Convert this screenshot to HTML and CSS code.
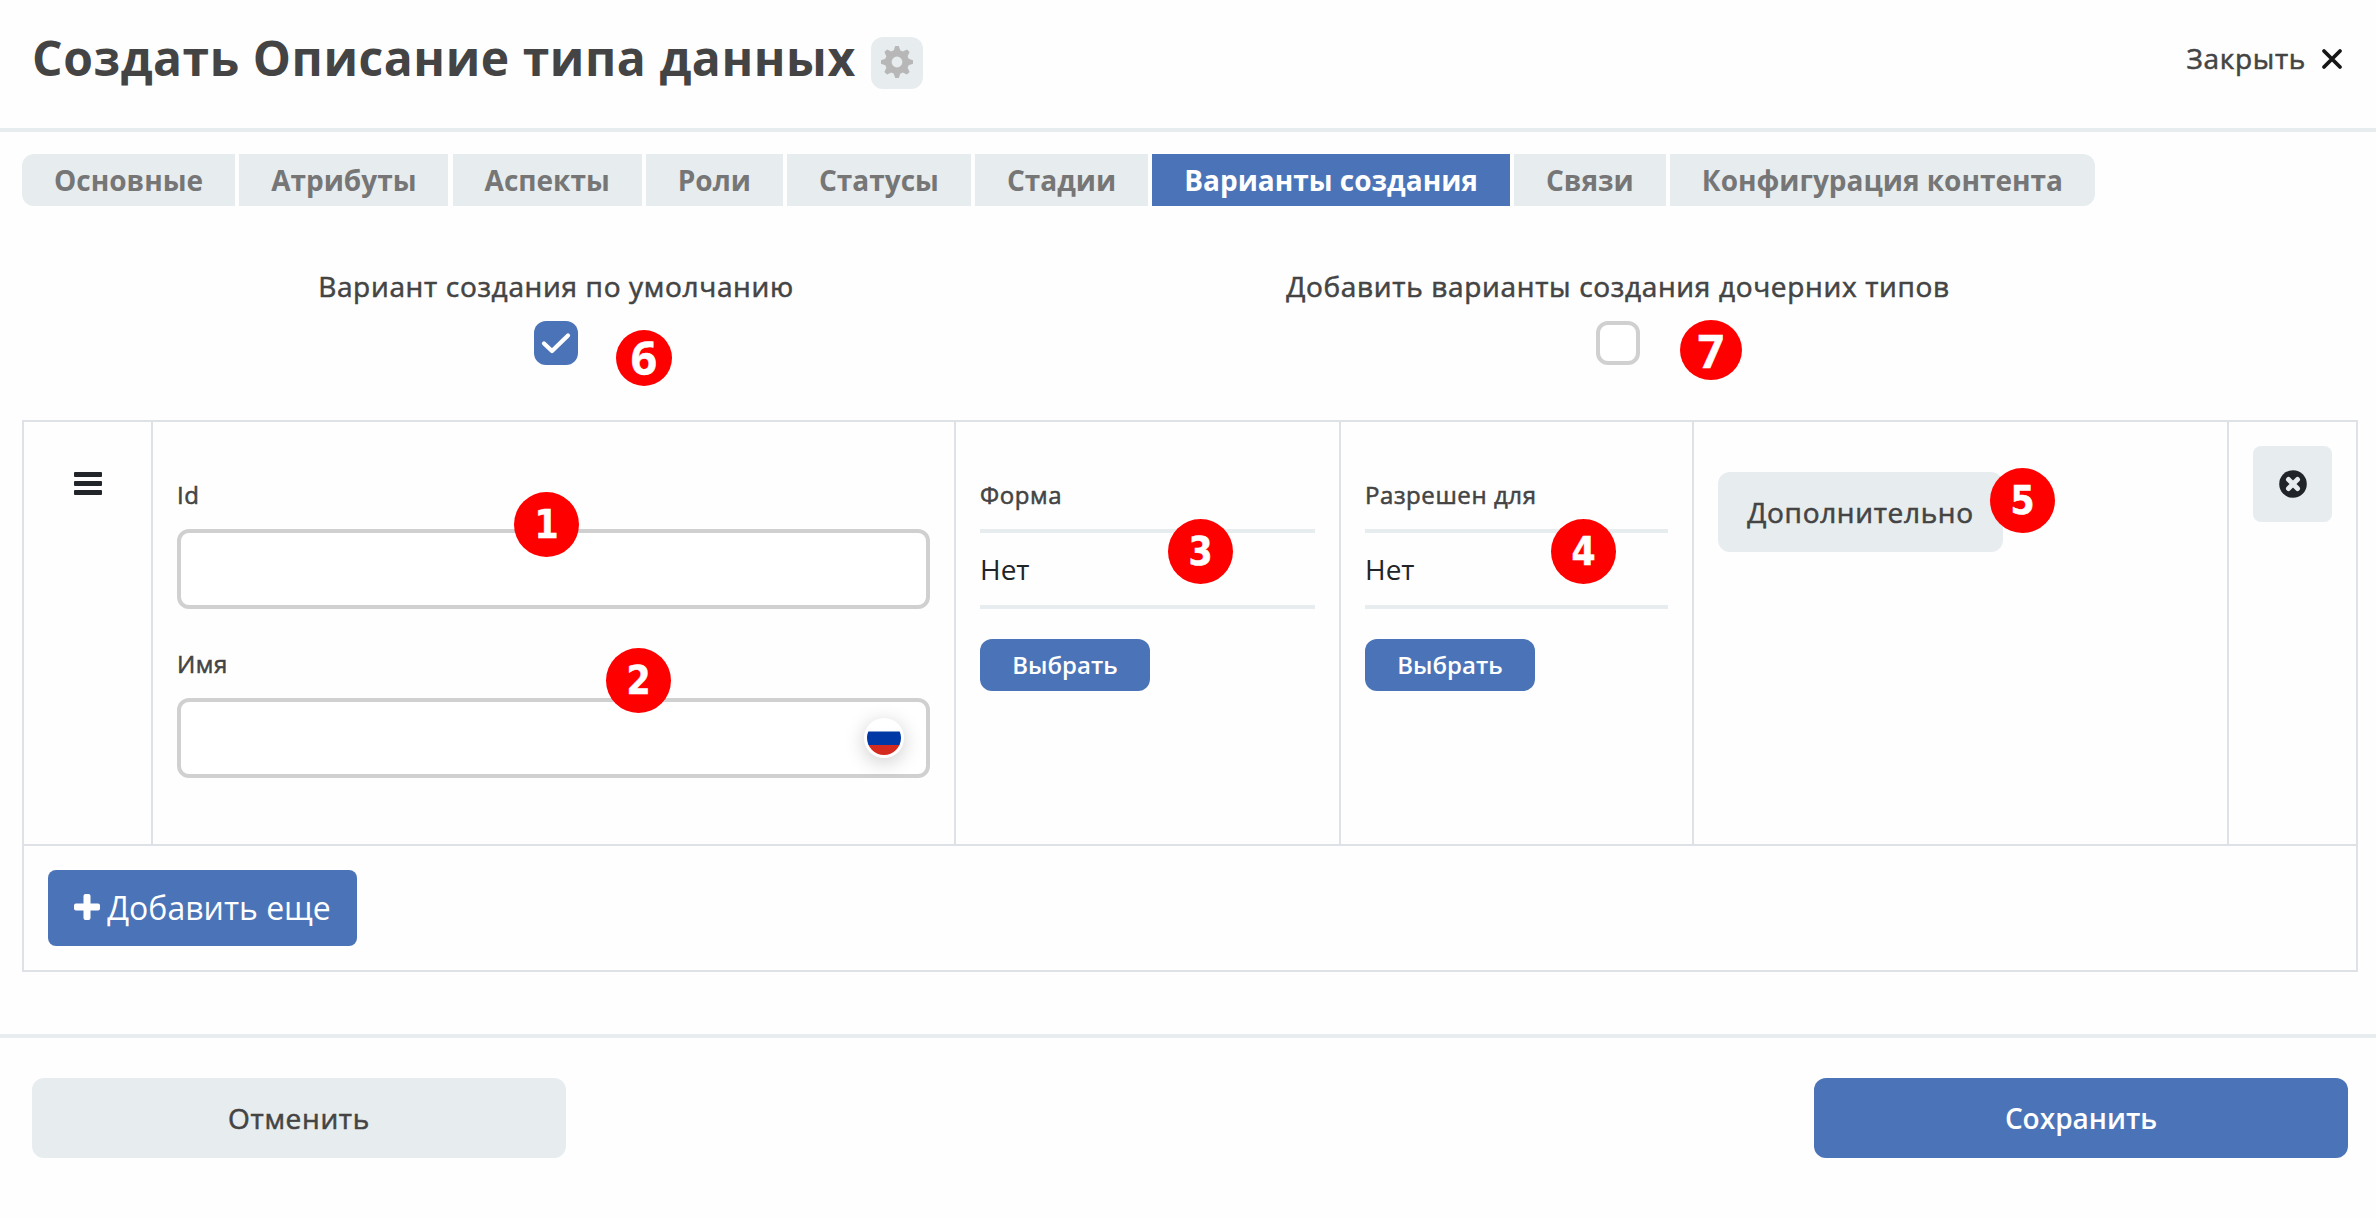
FILE: index.html
```html
<!DOCTYPE html>
<html lang="ru">
<head>
<meta charset="utf-8">
<title>Создать Описание типа данных</title>
<link rel="stylesheet" href="styles.css">
</head>
<body>
<div class="modal">
  <header class="header">
    <h1 class="title">Создать Описание типа данных</h1>
    <button class="gear" aria-label="Настройки">
      <svg width="32" height="32" viewBox="0 0 32 32"><path fill="#b7b7b7" fill-rule="evenodd" d="M14.200 0h3.600l1.400 4.300 2.600 1.100 4.100-2 2.700 2.700-2 4.100 1.100 2.600 4.300 1.400v3.600l-4.300 1.400-1.100 2.600 2 4.100-2.700 2.700-4.100-2-2.600 1.100-1.400 4.300h-3.600l-1.400-4.300-2.600-1.100-4.100 2-2.700-2.700 2-4.100-1.100-2.600L0 17.800v-3.600l4.300-1.400 1.100-2.600-2-4.100 2.700-2.700 4.100 2 2.600-1.100zM16 10.600a5.400 5.400 0 1 0 0 10.800a5.400 5.400 0 0 0 0-10.800z"/></svg>
    </button>
    <button class="close medium">Закрыть
      <svg width="22" height="22" viewBox="0 0 22 22"><path d="M3 3l16 16M19 3L3 19" stroke="#161616" stroke-width="3.800" stroke-linecap="round"/></svg>
    </button>
  </header>
  <nav class="tabs">
    <a class="tab">Основные</a>
    <a class="tab">Атрибуты</a>
    <a class="tab">Аспекты</a>
    <a class="tab">Роли</a>
    <a class="tab">Статусы</a>
    <a class="tab">Стадии</a>
    <a class="tab active">Варианты создания</a>
    <a class="tab">Связи</a>
    <a class="tab">Конфигурация контента</a>
  </nav>
  <section class="options">
    <div class="option">
      <span class="medium">Вариант создания по умолчанию</span>
      <span class="check checked"><svg width="44" height="44" viewBox="0 0 44 44"><path d="M10 22.500l8 7.500L34 14.500" fill="none" stroke="#fff" stroke-width="4.200" stroke-linecap="round" stroke-linejoin="round"/></svg></span>
      <b class="badge sans b6">6</b>
    </div>
    <div class="option">
      <span class="medium">Добавить варианты создания дочерних типов</span>
      <span class="check"></span>
      <b class="badge sans b7">7</b>
    </div>
  </section>
  <section class="grid">
    <div class="row">
      <div class="cell drag">
        <svg width="28" height="23" viewBox="0 0 28 23" fill="#212529"><rect width="28" height="5" rx="1"/><rect y="9" width="28" height="5" rx="1"/><rect y="18" width="28" height="5" rx="1"/></svg>
      </div>
      <div class="cell form">
        <label class="label medium">Id</label>
        <div class="input"></div>
        <label class="label medium">Имя</label>
        <div class="input">
          <span class="flag"><svg width="34" height="34" viewBox="0 0 34 34"><path fill="#0039a6" d="M0 10.500h34V24H0z"/><path fill="#d52b1e" d="M0 24h34v10H0z"/></svg></span>
        </div>
        <b class="badge b1">1</b>
        <b class="badge b2">2</b>
      </div>
      <div class="cell form">
        <label class="label medium">Форма</label>
        <div class="value">Нет</div>
        <button class="select">Выбрать</button>
        <b class="badge b3">3</b>
      </div>
      <div class="cell form">
        <label class="label medium">Разрешен для</label>
        <div class="value">Нет</div>
        <button class="select">Выбрать</button>
        <b class="badge b4">4</b>
      </div>
      <div class="cell extra">
        <button class="more medium">Дополнительно</button>
        <b class="badge b5">5</b>
      </div>
      <div class="cell remove-cell">
        <button class="remove" aria-label="Удалить">
          <svg width="28" height="28" viewBox="0 0 28 28"><circle cx="14" cy="14" r="13.800" fill="#212529"/><path d="M9.500 9.500l9 9M18.500 9.500l-9 9" stroke="#e7ecee" stroke-width="5" stroke-linecap="round"/></svg>
        </button>
      </div>
    </div>
    <div class="add-row">
      <button class="add"><svg width="26" height="26" viewBox="0 0 26 26"><path d="M11.500 0h3a2 2 0 0 1 2 2v7.500H24a2 2 0 0 1 2 2v3a2 2 0 0 1-2 2h-7.500V24a2 2 0 0 1-2 2h-3a2 2 0 0 1-2-2v-7.500H2a2 2 0 0 1-2-2v-3a2 2 0 0 1 2-2h7.500V2a2 2 0 0 1 2-2z" fill="#fff"/></svg>Добавить еще</button>
    </div>
  </section>
  <footer class="footer">
    <button class="action cancel medium">Отменить</button>
    <button class="action save">Сохранить</button>
  </footer>
</div>
</body>
</html>
```
FILE: styles.css
```css
* { box-sizing: border-box; }
body { margin: 0; background: #fefefe; color: #444; font-family: "Open Sans", sans-serif; font-size: 28px; font-weight: 400; }
button { border: 0; padding: 0; background: none; font: inherit; color: inherit; display: flex; align-items: center; justify-content: center; }
svg { display: block; flex: none; }
.medium { letter-spacing: .024em; -webkit-text-stroke: .55px currentColor; }
.modal { display: flex; flex-direction: column; width: 2376px; height: 1218px; overflow: hidden; }
.header { display: flex; align-items: flex-start; height: 132px; padding: 0 33px 0 32px; border-bottom: 4px solid #e7ecee; }
.title { margin: 25px 15px 0 0; font-size: 48px; line-height: 66px; font-weight: 700; letter-spacing: .56px; white-space: nowrap; }
.gear { width: 52px; height: 52px; margin-top: 37px; padding-bottom: 3px; border-radius: 12px; background: #e7ecee; }
.close { margin: 38px 0 0 auto; gap: 15px; line-height: 40px; }
.close svg { margin-top: 2px; }
.tabs { display: flex; gap: 4.08px; margin: 22px 0 0 22px; }
.tab { height: 52px; padding: 0 32px; line-height: 53px; background: #e7ecee; color: #767676; font-weight: 700; white-space: nowrap; }
.tab:first-child { border-radius: 12px 0 0 12px; }
.tab:last-child { border-radius: 0 12px 12px 0; }
.tab.active { background: #4b74b8; color: #fff; }
.options { display: grid; grid-template-columns: 1062px 1062px; margin: 59px 0 0 25px; height: 155px; }
.option { position: relative; display: flex; flex-direction: column; align-items: center; line-height: 42px; }
.check { width: 44px; height: 44px; margin-top: 14px; border: 4px solid #d0d0d0; border-radius: 12px; background: #fff; }
.check.checked { border: 0; background: #4b74b8; }
.grid { margin: 0 18px 0 22px; border: 2px solid #dee2e6; }
.row { display: grid; grid-template-columns: 129px 803px 385px 353px 535px 127px; height: 424px; border-bottom: 2px solid #dee2e6; }
.cell { position: relative; border-right: 2px solid #dee2e6; padding: 24px; }
.cell:last-child { border-right: 0; }
.drag { padding: 50px 0 0 50px; }
.form { display: flex; flex-direction: column; align-items: flex-start; padding-top: 56px; }
.label { font-size: 24px; line-height: 34px; height: 51px; }
.input { position: relative; width: 753px; height: 80px; margin-bottom: 38px; border: 4px solid #d0d0d0; border-radius: 12px; background: #fff; }
.flag { position: absolute; right: 22px; top: 16px; width: 40px; height: 40px; padding: 3px; border-radius: 50%; background: #fff; box-shadow: 0 4px 20px rgba(0, 0, 0, .2); }
.flag svg { border-radius: 50%; }
.value { align-self: stretch; height: 80px; border: 4px solid #e7ecee; border-width: 4px 0; line-height: 72px; font-weight: 400; color: #212529; }
.select { width: 170px; height: 52px; margin-top: 30px; padding-bottom: 1px; border-radius: 12px; background: #4b74b8; color: #fff; font-size: 24px; font-weight: 600; }
.extra { padding-top: 50px; }
.more { width: 285px; height: 80px; border-radius: 12px; background: #e7ecee; }
.remove { width: 79px; height: 76px; border-radius: 8px; background: #e7ecee; }
.add-row { height: 124px; padding: 24px; }
.add { width: 309px; height: 76px; padding-bottom: 2px; gap: 7px; border-radius: 8px; background: #4b74b8; color: #fff; font-size: 32px; font-weight: 400; }
.footer { display: flex; justify-content: space-between; margin-top: 62px; padding: 40px 28px 0 32px; border-top: 4px solid #e7ecee; }
.action { width: 534px; height: 80px; border-radius: 12px; }
.cancel { background: #e7ecee; }
.save { background: #4b74b8; color: #fff; font-weight: 600; }

/* Numbered callouts over the form */
.badge { position: absolute; z-index: 2; width: 65px; height: 65px; border-radius: 50%; background: #f00; color: #fff; font: 700 38.500px/65px "DejaVu Sans Condensed", "DejaVu Sans", sans-serif; text-align: center; -webkit-text-stroke: .5px #fff; }
.badge.sans { font-family: "Noto Sans", sans-serif; font-size: 46px; }
.b1 { left: 361px; top: 70px; }
.b2 { left: 453px; top: 226px; }
.b3 { left: 212px; top: 97px; }
.b4 { left: 210px; top: 97px; }
.b5 { left: 296px; top: 46px; }
.badge.b6 { left: 591px; top: 65px; width: 56px; height: 56px; line-height: 55px; }
.badge.b7 { left: 593px; top: 55px; width: 62px; height: 60px; line-height: 60px; }
```
